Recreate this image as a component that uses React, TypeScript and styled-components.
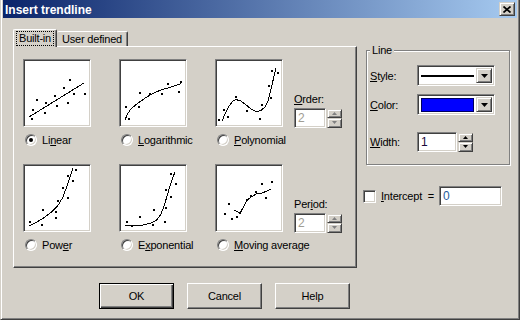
import React, { FC } from 'react'
import styled, { createGlobalStyle, css } from 'styled-components'

type Pt = [number, number]

interface ITrend {
    id: string,
    label: React.ReactNode,
    points: Pt[],
    line: Pt[],
    checked?: boolean
}

const TRENDS: ITrend[] = [
    {
        id: 'linear',
        label: <>Li<u>n</u>ear</>,
        checked: true,
        points: [[9, 60], [10, 51], [14, 41], [22, 54], [23, 44], [32, 37], [34, 47], [41, 29], [45, 44], [47, 21], [51, 35], [62, 35]],
        line: [[6, 58], [61, 24]],
    },
    {
        id: 'log',
        label: <><u>L</u>ogarithmic</>,
        points: [[7, 48], [10, 60], [20, 48], [21, 34], [31, 35], [43, 35], [49, 25], [60, 33], [62, 23]],
        line: [[6, 61], [8, 56], [11, 51], [16, 46.5], [21, 42.7], [27, 38.5], [34, 34.3], [42, 31], [51, 28.3], [62, 24.6]],
    },
    {
        id: 'poly',
        label: <><u>P</u>olynomial</>,
        points: [[4, 61], [9, 51], [13, 58], [21, 38], [32, 52], [45, 60], [47, 46], [54, 27], [56, 39], [57, 12], [63, 14]],
        line: [[7, 62], [10, 55], [14, 47], [18, 42], [21, 40.7], [25, 41.5], [30, 45], [36, 50], [41.7, 52.7], [46, 51.5], [50, 48], [53, 42], [55, 34], [57, 26], [59, 17], [61, 9]],
    },
    {
        id: 'power',
        label: <>Pow<u>e</u>r</>,
        points: [[7, 58], [19, 61], [20, 46], [33, 48], [33, 54], [35, 37], [40, 24], [45, 34], [45, 12], [50, 17], [53, 6]],
        line: [[6, 62], [13, 58.5], [20.3, 54.3], [28, 48.5], [35.3, 41], [40, 33], [43.7, 22.7], [47, 13], [49.7, 4.5]],
    },
    {
        id: 'exp',
        label: <>E<u>x</u>ponential</>,
        points: [[8, 58], [13, 62], [21, 53], [34, 61], [35, 46], [46, 58], [47, 44], [47, 26], [52, 33], [52, 10], [57, 20]],
        line: [[6, 61.5], [15, 61.3], [24.3, 61], [32, 59], [37.7, 56], [41.5, 51], [44.3, 44.3], [47.5, 34], [50.3, 24.3], [53, 16], [56, 7.7]],
    },
    {
        id: 'moving',
        label: <><u>M</u>oving average</>,
        points: [[10, 50], [14, 40], [17, 55], [22, 53], [25, 49], [32, 36], [36, 32], [41, 28], [47, 20], [51, 34], [57, 18]],
        line: [[19.3, 46], [25, 49.3], [32.3, 36], [36.7, 32.7], [41, 30], [46.7, 29.3], [56, 25]],
    },
]

const GlobalStyle = createGlobalStyle`
    html, body {
        margin: 0;
        padding: 0;
        background: #d4d0c8;
    }
    body {
        font-family: "Liberation Sans", Arial, sans-serif;
        font-size: 11px;
        letter-spacing: -0.2px;
        color: #000;
    }
    * { box-sizing: border-box; }
`

const raised = css`
    border: 1px solid;
    border-color: #d4d0c8 #404040 #404040 #d4d0c8;
    box-shadow: inset 1px 1px #fff, inset -1px -1px #808080;
    background: #d4d0c8;
`

const sunken = css`
    border: 1px solid;
    border-color: #808080 #fff #fff #808080;
    box-shadow: inset 1px 1px #404040, inset -1px -1px #d4d0c8;
    background: #fff;
`

const Chart: FC<{ trend: ITrend }> = ({ trend }) => (
    <ChartBox>
        <svg width={64} height={64} viewBox="2 2 64 64">
            <polyline
                points={trend.line.map(p => p.join(',')).join(' ')}
                fill="none"
                stroke="#000"
                strokeWidth={1}
                shapeRendering="crispEdges"
            />
            {trend.points.map(([x, y], i) => (
                <rect key={i} x={x - 1} y={y - 1} width={2} height={2} fill="#000" shapeRendering="crispEdges" />
            ))}
        </svg>
    </ChartBox>
)

const Spinner: FC<{ value: string, width: number, disabled?: boolean }> = ({ value, width, disabled }) => (
    <SpinWrap>
        <Edit $width={width} $disabled={disabled}>{value}</Edit>
        <SpinBox>
            <SpinButton><svg width={5} height={3}><polygon points="2.5,0 5,3 0,3" fill={disabled ? '#808080' : '#000'} /></svg></SpinButton>
            <SpinButton><svg width={5} height={3}><polygon points="0,0 5,0 2.5,3" fill={disabled ? '#808080' : '#000'} /></svg></SpinButton>
        </SpinBox>
    </SpinWrap>
)

const DropArrow = () => (
    <svg width={7} height={4}><polygon points="0,0 7,0 3.5,4" fill="#000" /></svg>
)

const TrendItem: FC<{ trend: ITrend }> = ({ trend }) => (
    <Item>
        <Chart trend={trend} />
        <RadioRow>
            <Radio $checked={trend.checked} />
            <span>{trend.label}</span>
        </RadioRow>
    </Item>
)

const App = () => {
    return (
        <>
            <GlobalStyle />
            <Window>
                <TitleBar>
                    <Title>Insert trendline</Title>
                    <CloseButton>
                        <svg width={8} height={7} viewBox="0 0 8 7">
                            <path d="M0.5 0.5 L7.5 6.5 M7.5 0.5 L0.5 6.5" stroke="#000" strokeWidth={1.7} />
                        </svg>
                    </CloseButton>
                </TitleBar>
                <Body>
                    <MainRow>
                        <LeftCol>
                            <TabStrip>
                                <Tab $active><Focus>Built-in</Focus></Tab>
                                <Tab>User defined</Tab>
                            </TabStrip>
                            <Panel>
                                <TrendGrid>
                                    <TrendItem trend={TRENDS[0]} />
                                    <TrendItem trend={TRENDS[1]} />
                                    <TrendItem trend={TRENDS[2]} />
                                    <Options>
                                        <span><u>O</u>rder:</span>
                                        <Spinner value="2" width={32} disabled />
                                    </Options>
                                    <TrendItem trend={TRENDS[3]} />
                                    <TrendItem trend={TRENDS[4]} />
                                    <TrendItem trend={TRENDS[5]} />
                                    <Options>
                                        <span>Per<u>i</u>od:</span>
                                        <Spinner value="2" width={32} disabled />
                                    </Options>
                                </TrendGrid>
                            </Panel>
                        </LeftCol>
                        <RightCol>
                            <GroupBox>
                                <Legend>Line</Legend>
                                <FieldRow>
                                    <FieldLabel><u>S</u>tyle:</FieldLabel>
                                    <Combo>
                                        <ComboValue><LineSample /></ComboValue>
                                        <ComboButton><DropArrow /></ComboButton>
                                    </Combo>
                                </FieldRow>
                                <FieldRow $gap={8}>
                                    <FieldLabel><u>C</u>olor:</FieldLabel>
                                    <Combo>
                                        <ComboValue><ColorSample /></ComboValue>
                                        <ComboButton><DropArrow /></ComboButton>
                                    </Combo>
                                </FieldRow>
                                <FieldRow $gap={17}>
                                    <FieldLabel><u>W</u>idth:</FieldLabel>
                                    <Spinner value="1" width={40} />
                                </FieldRow>
                            </GroupBox>
                            <InterceptRow>
                                <CheckBox />
                                <InterceptLabel><u>I</u>ntercept&nbsp; =</InterceptLabel>
                                <InterceptEdit>0</InterceptEdit>
                            </InterceptRow>
                        </RightCol>
                    </MainRow>
                    <ButtonRow>
                        <Button $default>OK</Button>
                        <Button>Cancel</Button>
                        <Button>Help</Button>
                    </ButtonRow>
                </Body>
            </Window>
        </>
    )
}

const Window = styled.div`
    width: 520px;
    height: 320px;
    display: flex;
    flex-direction: column;
    background: #d4d0c8;
    border: 1px solid;
    border-top: 0;
    border-color: #d4d0c8 #404040 #404040 #d4d0c8;
    box-shadow: inset 1px 0 #fff, inset -1px -1px #808080;
    padding: 0 2px 2px 2px;
`

const TitleBar = styled.div`
    height: 18px;
    flex-shrink: 0;
    display: flex;
    align-items: center;
    justify-content: space-between;
    padding: 0 2px;
    background: linear-gradient(to right, #0a246a, #a6caf0);
`

const Title = styled.div`
    color: #fff;
    font-weight: bold;
    font-size: 12px;
    letter-spacing: 0;
    line-height: 14px;
    padding-top: 2px;
`

const CloseButton = styled.div`
    ${raised}
    width: 16px;
    height: 14px;
    display: flex;
    align-items: center;
    justify-content: center;
`

const Body = styled.div`
    display: flex;
    flex-direction: column;
    padding: 11px 0 0 10px;
`

const MainRow = styled.div`
    display: flex;
    align-items: flex-start;
    gap: 6px;
`

const LeftCol = styled.div`
    width: 344px;
    display: flex;
    flex-direction: column;
`

const TabStrip = styled.div`
    display: flex;
    align-items: flex-end;
    height: 17px;
`

const Tab = styled.div<{ $active?: boolean }>`
    background: #d4d0c8;
    border-top: 1px solid #fff;
    border-left: 1px solid #fff;
    border-right: 1px solid #404040;
    box-shadow: inset -1px 0 #808080;
    border-radius: 2px 2px 0 0;
    display: flex;
    align-items: center;
    line-height: 13px;

    ${p => p.$active ? css`
        position: relative;
        z-index: 1;
        height: 18px;
        margin-bottom: -1px;
        padding: 0 3px 1px;
    ` : css`
        height: 15px;
        padding: 0 5px 0 5px;
        border-left: 0;
    `}
`

const Focus = styled.span`
    outline: 1px dotted #000;
    outline-offset: 0;
    padding: 0 2px;
`

const Panel = styled.div`
    height: 222px;
    border: 1px solid;
    border-color: #fff #404040 #404040 #fff;
    box-shadow: inset -1px -1px #808080;
    padding: 12px 0 0 9px;
`

const TrendGrid = styled.div`
    display: grid;
    grid-template-columns: 96px 96px 79px auto;
    row-gap: 17px;
`

const Item = styled.div`
    display: flex;
    flex-direction: column;
    gap: 6px;
`

const ChartBox = styled.div`
    ${sunken}
    width: 68px;
    height: 68px;
    padding: 1px;

    & > svg { display: block; }
`

const RadioRow = styled.div`
    height: 14px;
    display: flex;
    align-items: center;
    gap: 5px;
    padding-left: 2px;
    white-space: nowrap;
`

const Radio = styled.span<{ $checked?: boolean }>`
    width: 12px;
    height: 12px;
    flex-shrink: 0;
    border-radius: 50%;
    background: #fff;
    border: 1px solid;
    border-color: #808080 #fff #fff #808080;
    box-shadow: inset 1px 1px #404040, inset -1px -1px #d4d0c8;
    display: flex;
    align-items: center;
    justify-content: center;

    &::after {
        content: '';
        width: 4px;
        height: 4px;
        border-radius: 50%;
        background: #000;
        display: ${p => p.$checked ? 'block' : 'none'};
    }
`

const Options = styled.div`
    margin-top: 34px;
    display: flex;
    flex-direction: column;
    gap: 2px;
    line-height: 13px;
`

const SpinWrap = styled.div`
    display: flex;
    align-items: center;
    gap: 1px;
`

const Edit = styled.div<{ $width: number, $disabled?: boolean }>`
    ${sunken}
    width: ${p => p.$width}px;
    height: 20px;
    padding: 0 3px;
    display: flex;
    align-items: center;
    font-size: 12px;
    color: ${p => p.$disabled ? '#a09d94' : '#1a0a3a'};
`

const SpinBox = styled.div`
    width: 15px;
    height: 19px;
    display: flex;
    flex-direction: column;
`

const SpinButton = styled.div`
    ${raised}
    flex: 1;
    display: flex;
    align-items: center;
    justify-content: center;

    & > svg { display: block; }
`

const RightCol = styled.div`
    width: 150px;
    padding-top: 15px;
    display: flex;
    flex-direction: column;
`

const GroupBox = styled.fieldset`
    margin: 0 0 0 3px;
    width: 144px;
    min-inline-size: 0;
    padding: 8px 0 12px 3px;
    border: 1px solid #808080;
    box-shadow: inset 1px 1px #fff, 1px 1px #fff;
`

const Legend = styled.legend`
    padding: 0 2px;
    margin: 0;
    line-height: 13px;
    background: #d4d0c8;
`

const FieldRow = styled.div<{ $gap?: number }>`
    display: flex;
    align-items: center;
    margin-top: ${p => p.$gap || 0}px;
`

const FieldLabel = styled.span`
    width: 47px;
    flex-shrink: 0;
`

const Combo = styled.div`
    ${sunken}
    width: 78px;
    height: 21px;
    padding: 2px;
    display: flex;
    align-items: stretch;
`

const ComboValue = styled.div`
    flex: 1;
    display: flex;
    align-items: center;
    padding: 0 2px 0 1px;
`

const LineSample = styled.div`
    width: 100%;
    height: 2px;
    background: #000;
`

const ColorSample = styled.div`
    flex: 1;
    height: 14px;
    background: #0000ff;
    border: 1px solid #000060;
`

const ComboButton = styled.div`
    ${raised}
    width: 16px;
    display: flex;
    align-items: center;
    justify-content: center;
`

const InterceptRow = styled.div`
    margin-top: 21px;
    height: 20px;
    display: flex;
    align-items: center;
`

const CheckBox = styled.span`
    ${sunken}
    width: 13px;
    height: 13px;
    flex-shrink: 0;
    margin-right: 5px;
`

const InterceptLabel = styled.span`
    width: 58px;
    white-space: nowrap;
`

const InterceptEdit = styled.div`
    ${sunken}
    width: 63px;
    height: 20px;
    padding: 0 3px;
    display: flex;
    align-items: center;
    font-size: 12px;
    color: #2a5b9a;
`

const ButtonRow = styled.div`
    margin-top: 15px;
    padding-left: 86px;
    display: flex;
    gap: 13px;
`

const Button = styled.div<{ $default?: boolean }>`
    width: 75px;
    height: 26px;
    display: flex;
    align-items: center;
    justify-content: center;
    font-size: 11px;
    background: #d4d0c8;
    border: 1px solid;

    ${p => p.$default ? css`
        border-color: #000;
        box-shadow: inset 1px 1px #fff, inset -1px -1px #404040, inset -2px -2px #808080;
    ` : css`
        border-color: #fff #404040 #404040 #fff;
        box-shadow: inset -1px -1px #808080;
    `}
`

export default App
